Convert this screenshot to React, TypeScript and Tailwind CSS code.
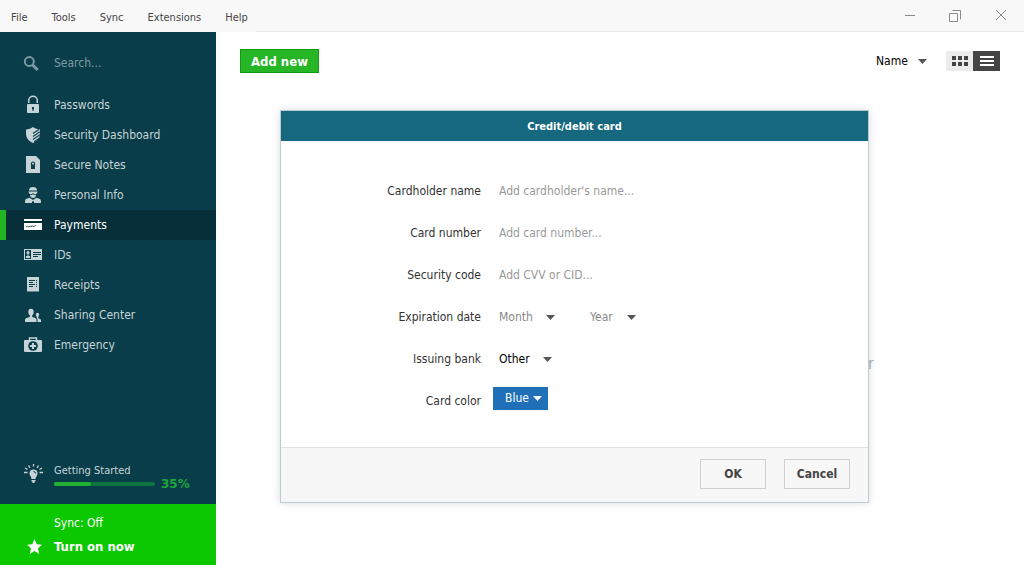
import React from "react";

type IconProps = {
    children: React.ReactNode;
};

const Icon = ({ children }: IconProps) => {
    return (
        <svg
            width="20"
            height="20"
            viewBox="0 0 20 20"
            fill="currentColor"
            aria-hidden="true"
            className="shrink-0"
        >
            {children}
        </svg>
    );
};

const ICONS = {
    lock: (
        <Icon>
            <path
                d="M5.700 8V5.500a4.300 4.300 0 0 1 8.600 0V8"
                fill="none"
                stroke="currentColor"
                strokeWidth="1.500"
            />
            <path
                fillRule="evenodd"
                d="M5 9h10a1 1 0 0 1 1 1v7a1 1 0 0 1-1 1H5a1 1 0 0 1-1-1v-7a1 1 0 0 1 1-1zm4 3v2l.5.5V16h1v-1.500l.5-.5v-2z"
            />
        </Icon>
    ),
    shield: (
        <Icon>
            <path d="M10 2c2 1.500 4.500 2.400 7 2.500v4c0 4.500-2.500 7.500-7 9.500-4.500-2-7-5-7-9.500v-4C5.500 4.400 8 3.500 10 2z" />
            <path
                d="M10 8.500l6-4M10 11.500l7-4.700M10 14.500l7-4.700M11 17l5-3.500"
                fill="none"
                stroke="#093d4a"
                strokeWidth="1.100"
            />
        </Icon>
    ),
    note: (
        <Icon>
            <path d="M3 1h10l4 4v13H3z" />
            <path
                d="M8.500 10V8.500a1.500 1.500 0 0 1 3 0V10"
                fill="none"
                stroke="#093d4a"
                strokeWidth="1.200"
            />
            <path d="M8 9.500h4V14H8z" fill="#093d4a" />
        </Icon>
    ),
    person: (
        <Icon>
            <path d="M6 5.500C6 3 7.500 2 10 2s4 1 4 3.500z" />
            <path d="M5.500 6.500h9v1h-.5c0 1.200-.7 1.800-1.700 1.800-1 0-1.700-.5-2.300-1.300-.6.800-1.300 1.300-2.300 1.300C6.700 9.300 6 8.700 6 7.500h-.5z" />
            <path d="M6.800 10.200c1.200.3 2.200-.2 3.200-1 1 .8 2 1.300 3.200 1-.5 1.800-1.700 2.800-3.200 2.800s-2.700-1-3.200-2.800z" />
            <path d="M6.500 12.800L10 15l3.500-2.200 3.500 1.200c.8.500 1 1.500 1 4h-6.800L10.500 16h-1L8.800 18H2c0-2.500.2-3.500 1-4z" />
        </Icon>
    ),
    card: (
        <Icon>
            <path d="M1 4h18v2H1zM1 8h18v7H1z" />
            <path
                d="M3 12l1.500-1 1 1 1.500-1 1 .5 1.500-.5 1 .5 2-1"
                fill="none"
                stroke="#062f3a"
                strokeWidth=".8"
            />
        </Icon>
    ),
    id: (
        <Icon>
            <path fillRule="evenodd" d="M1 4h18v11H1zm1 1v9h6V5z" />
            <circle cx="5" cy="7.500" r="1.500" />
            <path d="M4.500 8.500h1V11H7v2H3v-2h1.500z" />
            <path d="M10 7h8v1h-8zM10 9h8v1h-8zM10 11h5v1h-5z" fill="#093d4a" />
        </Icon>
    ),
    receipt: (
        <Icon>
            <path d="M4 2h12v15l-1-1-1 1-1-1-1 1-1-1-1 1-1-1-1 1-1-1-1 1-1-1-1 1z" />
            <path
                d="M6 5h6v1H6zM6 7h4v1H6zM6 9h6v1H6zM6 11h4v1H6zM13 5h1v1h-1zM13 7h1v1h-1zM13 9h1v1h-1zM13 11h1v1h-1z"
                fill="#093d4a"
            />
        </Icon>
    ),
    people: (
        <Icon>
            <ellipse cx="8" cy="7" rx="2.700" ry="3.200" />
            <path d="M6.800 9h2.400v3c2.400.6 4.300 1.200 4.300 2.500V17H2v-2.500c0-1.300 2.400-1.900 4.800-2.500z" />
            <ellipse cx="14.500" cy="9.800" rx="1.700" ry="2.100" />
            <path d="M13.800 11h1.500v2.300c1.600.5 2.700 1 2.700 1.900V17h-3.500v-2.500c0-.5-.3-.9-.7-1.200z" />
        </Icon>
    ),
    kit: (
        <Icon>
            <path
                d="M6.500 5V3h7v2"
                fill="none"
                stroke="currentColor"
                strokeWidth="1.500"
            />
            <path d="M2 5h16a1 1 0 0 1 1 1v10a1 1 0 0 1-1 1H2a1 1 0 0 1-1-1V6a1 1 0 0 1 1-1z" />
            <circle cx="10" cy="11" r="4.800" fill="#093d4a" />
            <path d="M9 8h2v2h2v2h-2v2H9v-2H7v-2h2z" />
        </Icon>
    ),
    bulb: (
        <Icon>
            <path d="M10.500 5.500a4 4 0 0 1 4 4c0 2.300-2 3-2 5.500h-4c0-2.500-2-3.200-2-5.500a4 4 0 0 1 4-4zM8.500 16h4v1.500h-4zM9.500 17.500h2V19h-2z" />
            <path
                d="M10.500 0v2.500M5.500 1.500l1.500 2.300M15.500 1.500L14 3.800M2 4l2.500 1.500M19 4l-2.500 1.500M1 8.500h3.500M16.500 8.500H20"
                fill="none"
                stroke="currentColor"
                strokeWidth="1.300"
            />
            <path
                d="M10.500 7.500a2 2 0 0 1 2 2"
                fill="none"
                stroke="#093d4a"
            />
        </Icon>
    ),
    star: (
        <Icon>
            <path d="M11.500 2l2.200 5.200 5.300.5-4 3.600 1.200 5.700-4.700-3-4.700 3L8 11.300 4 7.700l5.300-.5z" />
        </Icon>
    ),
    search: (
        <Icon>
            <circle
                cx="6.300"
                cy="7.500"
                r="4.500"
                fill="none"
                stroke="currentColor"
                strokeWidth="1.900"
            />
            <path
                d="M9.700 11l5 5"
                stroke="currentColor"
                strokeWidth="3"
            />
        </Icon>
    ),
};

const MENU = ["File", "Tools", "Sync", "Extensions", "Help"];

const NAV_LINKS = [
    { label: "Passwords", icon: ICONS.lock },
    { label: "Security Dashboard", icon: ICONS.shield },
    { label: "Secure Notes", icon: ICONS.note },
    { label: "Personal Info", icon: ICONS.person },
    { label: "Payments", icon: ICONS.card, active: true },
    { label: "IDs", icon: ICONS.id },
    { label: "Receipts", icon: ICONS.receipt },
    { label: "Sharing Center", icon: ICONS.people },
    { label: "Emergency", icon: ICONS.kit },
];

const TEXT_FIELDS = [
    { id: "holder", label: "Cardholder name", placeholder: "Add cardholder's name..." },
    { id: "number", label: "Card number", placeholder: "Add card number..." },
    { id: "code", label: "Security code", placeholder: "Add CVV or CID..." },
];

type DropdownProps = {
    id: string;
    label?: string;
    value: string;
    className: string;
    arrowClassName?: string;
};

const Dropdown = ({
    id,
    label,
    value,
    className,
    arrowClassName = "right-0 text-[#555555]",
}: DropdownProps) => {
    return (
        <div className="relative flex items-center">
            <select
                id={id}
                aria-label={label}
                className={`appearance-none outline-none ${className}`}
            >
                <option>{value}</option>
            </select>
            <svg
                width="9"
                height="5"
                viewBox="0 0 9 5"
                fill="currentColor"
                aria-hidden="true"
                className={`pointer-events-none absolute ${arrowClassName}`}
            >
                <path d="M0 0h9L4.500 5z" />
            </svg>
        </div>
    );
};

const TitleBar = () => {
    return (
        <header className="flex h-8 bg-[#f8f8f8] text-[11px] text-[#444444]">
            <nav className="flex w-64 items-center gap-6 pt-[3px] pl-[11px]">
                {MENU.map((item) => (
                    <button key={item} type="button">
                        {item}
                    </button>
                ))}
            </nav>
            <div className="flex flex-1 items-center justify-end gap-8 border-b border-[#e8e8e8] pr-[17px] text-[#8a8a8a]">
                <button type="button" aria-label="Minimize">
                    <svg width="12" height="12" viewBox="0 0 12 12" stroke="currentColor">
                        <path d="M0 5.500h10" />
                    </svg>
                </button>
                <button type="button" aria-label="Restore">
                    <svg width="14" height="14" viewBox="0 0 14 14" fill="none" stroke="currentColor">
                        <path d="M.5 4.500h8v8h-8zM3.500 1.500h8v9" />
                    </svg>
                </button>
                <button type="button" aria-label="Close">
                    <svg width="12" height="12" viewBox="0 0 12 12" stroke="currentColor">
                        <path d="M1 0l10 10M11 0L1 10" />
                    </svg>
                </button>
            </div>
        </header>
    );
};

const Sidebar = () => {
    return (
        <aside className="flex w-[216px] shrink-0 flex-col bg-[#093d4a] text-[#c6d3d7]">
            <label className="flex h-[58px] items-center gap-[11px] pt-[5px] pl-[23px] text-[#7f9aa2]">
                {ICONS.search}
                <input
                    type="search"
                    aria-label="Search"
                    placeholder="Search..."
                    className="w-32 outline-none placeholder:text-[#7f9aa2]"
                />
            </label>
            <nav className="flex flex-col">
                {NAV_LINKS.map((link) => (
                    <a
                        key={link.label}
                        href="#"
                        className={
                            link.active
                                ? "flex h-[30px] items-center gap-[11px] border-l-6 border-[#22b522] bg-[#062f3a] pl-[17px] text-white"
                                : "flex h-[30px] items-center gap-[11px] pl-[23px]"
                        }
                    >
                        {link.icon}
                        {link.label}
                    </a>
                ))}
            </nav>
            <div className="mt-auto flex gap-[11px] pb-[14px] pl-[23px]">
                {ICONS.bulb}
                <div className="w-[138px]">
                    <p className="text-[11px] leading-[14px]">Getting Started</p>
                    <div className="flex h-3 items-center gap-[6px]">
                        <div className="h-1 w-[101px] rounded-full bg-[#0f7540]">
                            <div className="h-1 rounded-full bg-[#22b035]" style={{ width: "37%" }} />
                        </div>
                        <span className="font-['DejaVu_Sans',sans-serif] font-bold text-[#1fa53a]">35%</span>
                    </div>
                </div>
            </div>
            <div className="flex h-[61px] flex-col justify-center bg-[#0bc800] pl-[23px] leading-6 text-white">
                <p className="pl-[31px]">Sync: Off</p>
                <button type="button" className="flex items-center gap-[11px] text-left text-[13px] font-bold">
                    {ICONS.star}
                    Turn on now
                </button>
            </div>
        </aside>
    );
};

const Toolbar = () => {
    return (
        <div className="flex items-center justify-between px-6 pt-[17px]">
            <button
                type="button"
                className="h-6 border border-[#109c10] bg-[#25b525] px-[10px] text-[13px] font-bold text-white"
            >
                Add new
            </button>
            <div className="flex items-center gap-[19px]">
                <Dropdown id="sort" label="Sort by" value="Name" className="w-[51px] text-black" />
                <div className="flex">
                    <button
                        type="button"
                        aria-label="Grid view"
                        className="flex h-5 w-[27px] items-center justify-center bg-[#ececec] text-[#444444]"
                    >
                        <svg width="16" height="10" viewBox="0 0 16 10" fill="currentColor">
                            <path d="M0 0h4v4H0zM6 0h4v4H6zM12 0h4v4h-4zM0 6h4v4H0zM6 6h4v4H6zM12 6h4v4h-4z" />
                        </svg>
                    </button>
                    <button
                        type="button"
                        aria-label="List view"
                        className="flex h-5 w-[27px] items-center justify-center bg-[#444444] text-white"
                    >
                        <svg width="14" height="10" viewBox="0 0 14 10" fill="currentColor">
                            <path d="M0 0h14v2H0zM0 4h14v2H0zM0 8h14v2H0z" />
                        </svg>
                    </button>
                </div>
            </div>
        </div>
    );
};

type FormRowProps = {
    id: string;
    label: string;
    children: React.ReactNode;
};

const FormRow = ({ id, label, children }: FormRowProps) => {
    return (
        <div className="grid h-[42px] grid-cols-[200px_1fr] items-center gap-3">
            <label htmlFor={id} className="text-right text-[#333333]">
                {label}
            </label>
            {children}
        </div>
    );
};

const CardDialog = () => {
    return (
        <form
            role="dialog"
            aria-label="Credit/debit card"
            className="absolute top-[78px] left-16 w-[589px] border border-[#b9ccd4] bg-white shadow-[0_0_8px_rgba(0,0,0,0.14)]"
        >
            <h2 className="bg-[#15687d] pt-px text-center text-[11px] leading-[29px] font-bold text-white">
                Credit/debit card
            </h2>
            <div className="pt-[29px] pb-[25px]">
                {TEXT_FIELDS.map((field) => (
                    <FormRow key={field.id} id={field.id} label={field.label}>
                        <input
                            id={field.id}
                            type="text"
                            placeholder={field.placeholder}
                            className="w-64 pl-[6px] outline-none placeholder:text-[#999999]"
                        />
                    </FormRow>
                ))}
                <FormRow id="month" label="Expiration date">
                    <div className="flex gap-[35px] pl-[6px] text-[#888888]">
                        <Dropdown id="month" value="Month" className="w-14" />
                        <Dropdown id="year" label="Expiration year" value="Year" className="w-[46px]" />
                    </div>
                </FormRow>
                <FormRow id="bank" label="Issuing bank">
                    <div className="flex pl-[6px]">
                        <Dropdown id="bank" value="Other" className="w-[53px] text-black" />
                    </div>
                </FormRow>
                <FormRow id="color" label="Card color">
                    <div className="flex pb-[5px]">
                        <Dropdown
                            id="color"
                            value="Blue"
                            className="h-[23px] w-[55px] bg-[#1f70b8] pl-3 text-white"
                            arrowClassName="right-[6px] text-white"
                        />
                    </div>
                </FormRow>
            </div>
            <div className="flex justify-end gap-[18px] border-t border-[#e0e0e0] bg-[#f7f7f7] pt-[11px] pr-[18px] pb-[13px] font-bold text-[#444444]">
                <button type="submit" className="h-[30px] w-[66px] border border-[#d0d0d0]">
                    OK
                </button>
                <button type="button" className="h-[30px] w-[66px] border border-[#d0d0d0]">
                    Cancel
                </button>
            </div>
        </form>
    );
};

const App = () => {
    return (
        <div className="flex min-h-screen flex-col bg-white font-['DejaVu_Sans_Condensed','DejaVu_Sans',sans-serif] text-[12px] leading-[17px]">
            <TitleBar />
            <div className="flex flex-1">
                <Sidebar />
                <main className="relative flex-1">
                    <Toolbar />
                    <p className="pt-[282px] pr-[150px] text-right text-[16px] text-[#b0b4bc]">r</p>
                    <CardDialog />
                </main>
            </div>
        </div>
    );
};

export default App;
